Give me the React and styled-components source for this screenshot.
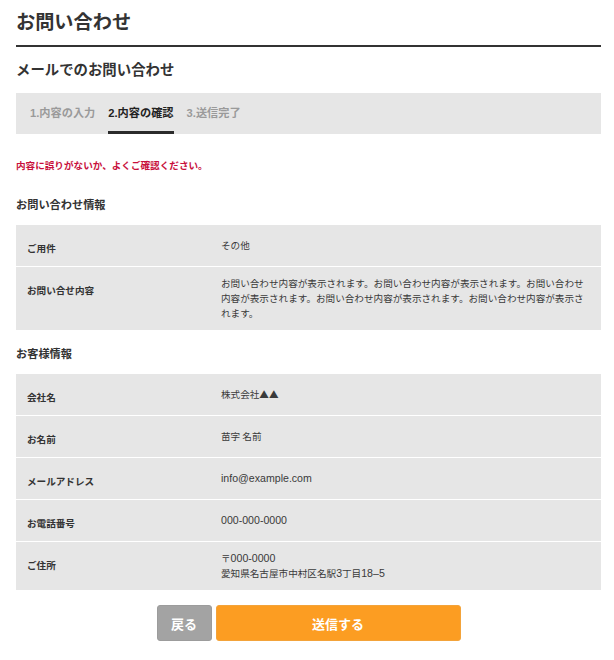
import React from "react";
import styled, { createGlobalStyle } from "styled-components";

const GlobalStyle = createGlobalStyle`
    body {
        margin: 0;
        background: #ffffff;
        font-family: "Liberation Sans", "Noto Sans CJK JP", sans-serif;
        color: #333333;
    }
    * {
        box-sizing: border-box;
    }
`;

const Page = styled.div`
    padding: 8px 13px 0 16px;
`;

const Title = styled.h1`
    margin: 0;
    font-size: 19.2px;
    line-height: 30px;
    font-weight: bold;
    padding-bottom: 7px;
    border-bottom: 2px solid #333333;
`;

const SubTitle = styled.h2`
    margin: 12px 0 0;
    font-size: 14.4px;
    line-height: 22px;
    font-weight: bold;
`;

const Steps = styled.ol`
    list-style: none;
    margin: 12px 0 0;
    padding: 0 14px;
    height: 41px;
    display: flex;
    gap: 13px;
    background: #e6e6e6;
`;

const Step = styled.li`
    font-size: 11.2px;
    line-height: 41px;
    font-weight: bold;
    color: ${(p) => (p.$active ? "#222222" : "#9a9a9a")};
    box-shadow: ${(p) => (p.$active ? "inset 0 -3px 0 #2b2b2b" : "none")};
`;

const Notice = styled.p`
    margin: 24px 0 0;
    font-size: 9.6px;
    line-height: 15px;
    font-weight: bold;
    color: #c8103c;
`;

const SectionTitle = styled.h3`
    margin: ${(p) => p.$top} 0 12px;
    font-size: 11.2px;
    line-height: 16px;
    font-weight: bold;
`;

const Table = styled.dl`
    margin: 0;
    background: #e6e6e6;
`;

const Row = styled.div`
    display: grid;
    grid-template-columns: 195px 1fr;
    & + & {
        border-top: 1px solid #ffffff;
    }
`;

const Label = styled.dt`
    padding: 16px 11px 10px;
    font-size: 9.6px;
    line-height: 15px;
    font-weight: bold;
`;

const Value = styled.dd`
    margin: 0;
    align-self: center;
    padding: 9px 12px 9px 10px;
    font-family: "Noto Sans CJK JP", sans-serif;
    font-size: 9.6px;
    line-height: 15px;
    color: #3a3a3a;
`;

/* latin runs are set a little larger, as the reference's font draws them */
const Latin = styled.span`
    font-family: "Liberation Sans", sans-serif;
    font-size: 10.6px;
`;

const Buttons = styled.div`
    display: flex;
    justify-content: center;
    gap: 4px;
    margin-top: 15px;
`;

const Button = styled.button`
    height: 36px;
    width: ${(p) => p.$width};
    border: 1px solid ${(p) => p.$border};
    border-radius: 3px;
    background: ${(p) => p.$bg};
    color: #ffffff;
    font-family: inherit;
    font-size: 13px;
    font-weight: bold;
    cursor: pointer;
`;

const inquiry = [
    { label: "ご用件", value: "その他" },
    {
        label: "お問い合せ内容",
        value: "お問い合わせ内容が表示されます。お問い合わせ内容が表示されます。お問い合わせ内容が表示されます。お問い合わせ内容が表示されます。お問い合わせ内容が表示されます。",
    },
];

const customer = [
    { label: "会社名", value: "株式会社▲▲" },
    { label: "お名前", value: "苗字 名前" },
    { label: "メールアドレス", value: <Latin>info@example.com</Latin> },
    { label: "お電話番号", value: <Latin>000-000-0000</Latin> },
    {
        label: "ご住所",
        value: (
            <>
                〒<Latin>000-0000</Latin>
                <br />
                愛知県名古屋市中村区名駅<Latin>3</Latin>丁目<Latin>18–5</Latin>
            </>
        ),
    },
];

const InfoTable = ({ rows }) => (
    <Table>
        {rows.map((row) => (
            <Row key={row.label}>
                <Label>{row.label}</Label>
                <Value>{row.value}</Value>
            </Row>
        ))}
    </Table>
);

const App = () => {
    return (
        <>
            <GlobalStyle />
            <Page>
                <Title>お問い合わせ</Title>
                <SubTitle>メールでのお問い合わせ</SubTitle>
                <Steps>
                    <Step>1.内容の入力</Step>
                    <Step $active>2.内容の確認</Step>
                    <Step>3.送信完了</Step>
                </Steps>
                <Notice>内容に誤りがないか、よくご確認ください。</Notice>
                <SectionTitle $top="24px">お問い合わせ情報</SectionTitle>
                <InfoTable rows={inquiry} />
                <SectionTitle $top="16px">お客様情報</SectionTitle>
                <InfoTable rows={customer} />
                <Buttons>
                    <Button $width="55px" $bg="#a3a3a3" $border="#9c9c9c">
                        戻る
                    </Button>
                    <Button $width="245px" $bg="#fc9d22" $border="#f3a33a">
                        送信する
                    </Button>
                </Buttons>
            </Page>
        </>
    );
};

export default App;
